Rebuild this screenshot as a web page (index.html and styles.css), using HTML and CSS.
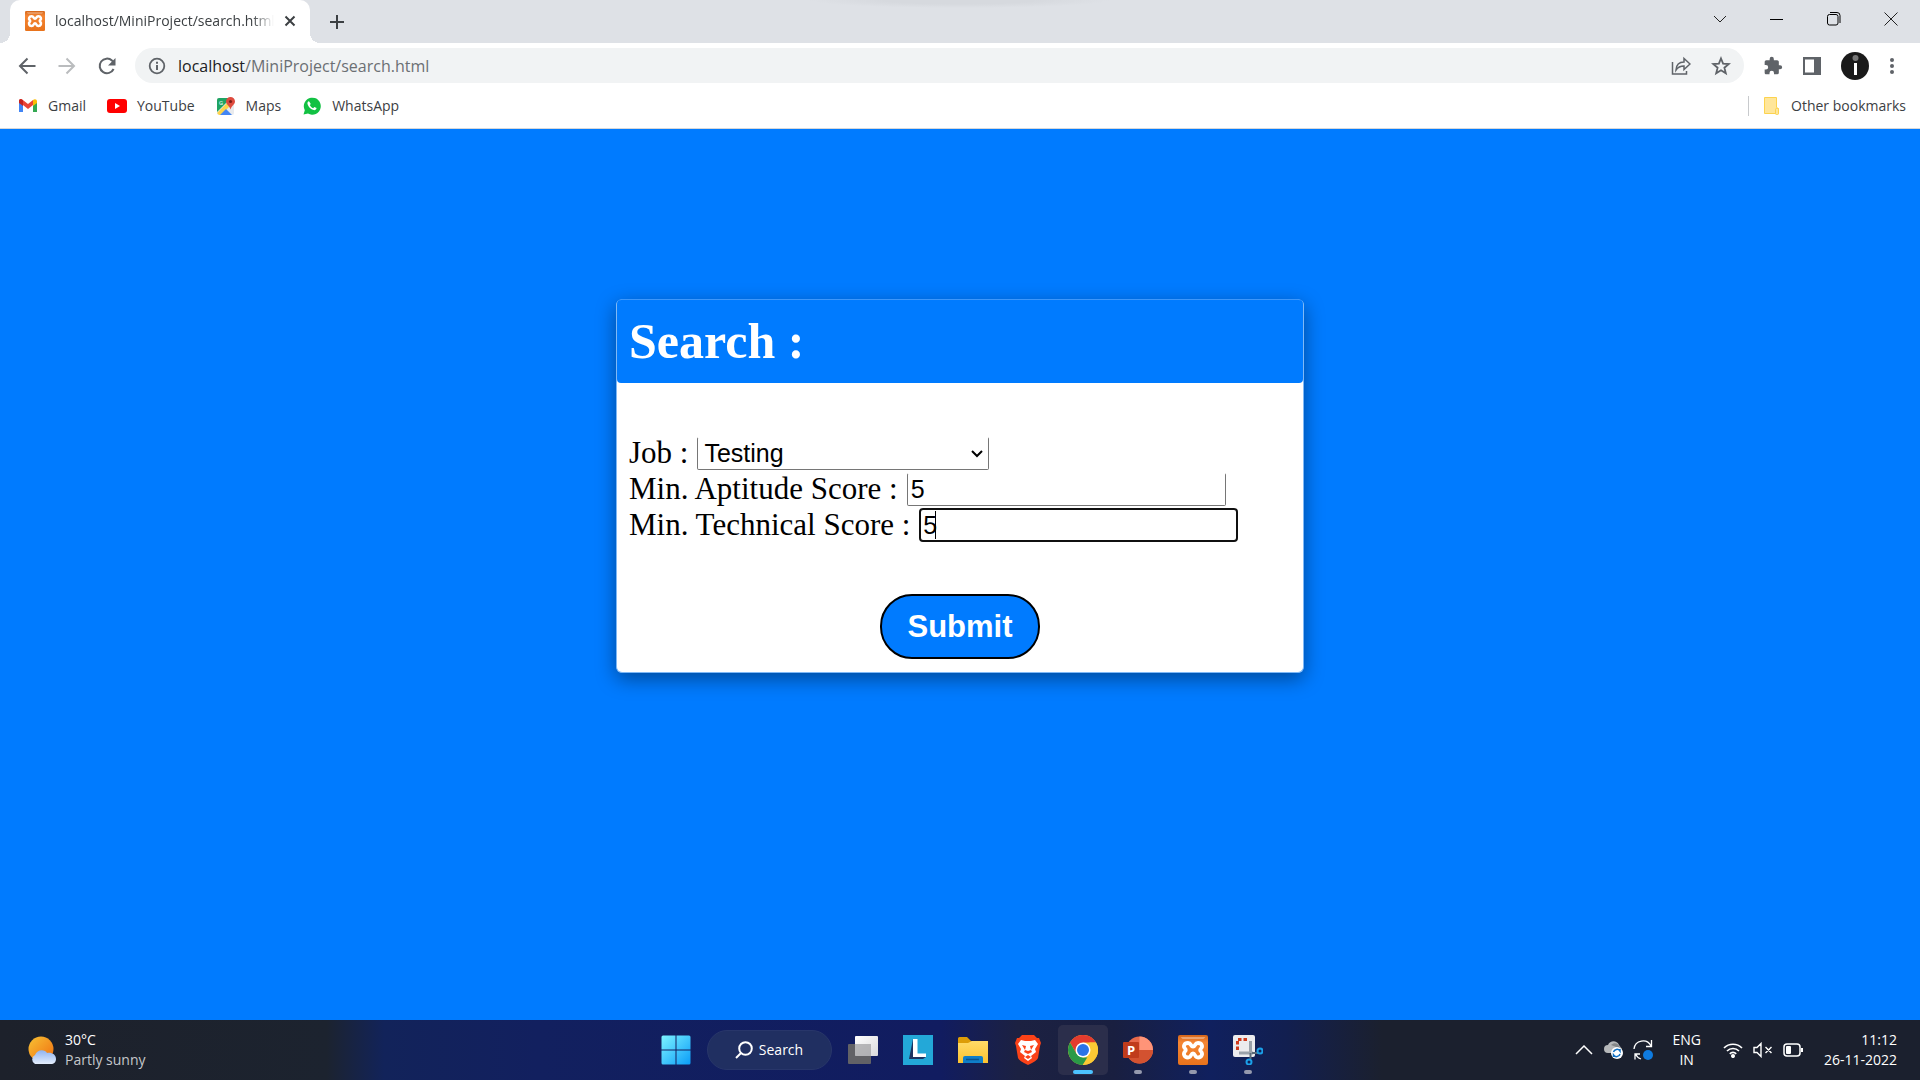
FILE: index.html
```html
<!DOCTYPE html>
<html lang="en">
<head>
<meta charset="utf-8">
<title>localhost/MiniProject/search.html</title>
<link rel="stylesheet" href="styles.css">
</head>
<body>
<svg class="defs" width="0" height="0" aria-hidden="true">
  <defs>
    <linearGradient id="orange" x2="0" y2="1"><stop stop-color="#d5661a"/><stop offset=".25" stop-color="#f58634"/><stop offset="1" stop-color="#e8731c"/></linearGradient>
    <linearGradient id="win" x2="1" y2="1"><stop stop-color="#7df3ff"/><stop offset="1" stop-color="#0a9cf8"/></linearGradient>
    <linearGradient id="sun" x2="1" y2="1"><stop stop-color="#f7c234"/><stop offset="1" stop-color="#f06d10"/></linearGradient>
    <linearGradient id="cloud" x2="0" y2="1"><stop stop-color="#8fb3f0"/><stop offset="1" stop-color="#e4edfc"/></linearGradient>
    <linearGradient id="folder" x2="0" y2="1"><stop stop-color="#ffdb68"/><stop offset="1" stop-color="#fdc22f"/></linearGradient>
    <linearGradient id="pane" x2="1" y2="1"><stop stop-color="#fff"/><stop offset="1" stop-color="#d9d9dc"/></linearGradient>
    <symbol id="xampp" viewBox="0 0 30 30">
      <rect width="30" height="30" rx="2" fill="url(#orange)"/>
      <path d="M2.500 2h25l-2 2h-21z" fill="#fff" opacity=".35"/>
      <path d="M10 8c-4 0-5 3.500-3 5.500q1.500 1.500 0 3c-2 2-1 6 3 6 3.500 0 2.500-4 5-4s1.500 4 5 4c4 0 5-4 3-6q-1.500-1.500 0-3c2-2 1-5.500-3-5.500-3.500 0-2.500 3.500-5 3.500s-1.500-3.500-5-3.500z" fill="none" stroke="#fff" stroke-width="3.800" stroke-linejoin="round"/>
    </symbol>
  </defs>
</svg>
<div class="screen">
  <header class="tabstrip">
    <div class="tab">
      <svg class="i20" viewBox="0 0 30 30"><use href="#xampp"/></svg>
      <span class="tab-title">localhost/MiniProject/search.html</span>
      <button class="icon-btn" aria-label="Close tab"><svg width="12" height="12" viewBox="0 0 12 12"><path d="M1.500 1.500l9 9m0-9l-9 9" stroke="#3c4043" stroke-width="2"/></svg></button>
    </div>
    <button class="icon-btn new-tab" aria-label="New tab"><svg width="16" height="16" viewBox="0 0 16 16"><path d="M8 1v14M1 8h14" stroke="#3c4043" stroke-width="2"/></svg></button>
    <div class="window-buttons">
      <button class="icon-btn" aria-label="Search tabs"><svg width="14" height="14" viewBox="0 0 14 14"><path d="M1 4l6 6 6-6" fill="none" stroke="#222"/></svg></button>
      <button class="icon-btn" aria-label="Minimize"><svg width="14" height="14" viewBox="0 0 14 14"><path d="M0 7.500h13" stroke="#000"/></svg></button>
      <button class="icon-btn" aria-label="Restore"><svg width="14" height="14" viewBox="0 0 14 14" fill="none" stroke="#000"><rect x=".5" y="2.500" width="10.500" height="10.500" rx="2"/><path d="M3 .5h7a3 3 0 0 1 3 3v7.500"/></svg></button>
      <button class="icon-btn" aria-label="Close"><svg width="14" height="14" viewBox="0 0 14 14"><path d="M.5.500l13 13m0-13l-13 13" stroke="#222"/></svg></button>
    </div>
  </header>
  <nav class="toolbar">
    <div class="nav-buttons">
      <button class="icon-btn" aria-label="Back"><svg width="18" height="18" viewBox="0 0 18 18"><path d="M17.500 9H2m7.500-7.500L2 9l7.500 7.500" fill="none" stroke="#5f6368" stroke-width="2"/></svg></button>
      <button class="icon-btn" aria-label="Forward"><svg width="18" height="18" viewBox="0 0 18 18"><path d="M.5 9H16M8.500 1.500L16 9l-7.500 7.500" fill="none" stroke="#babcbe" stroke-width="2"/></svg></button>
      <button class="icon-btn" aria-label="Reload"><svg width="18" height="18" viewBox="0 0 18 18"><path d="M15.600 12A7.300 7.300 0 1 1 14 3.600l2 2" fill="none" stroke="#5f6368" stroke-width="2"/><path d="M17.500 1v7.500H10z" fill="#5f6368"/></svg></button>
    </div>
    <div class="address">
      <svg width="18" height="18" viewBox="0 0 18 18"><circle cx="9" cy="9" r="7.300" fill="none" stroke="#5f6368" stroke-width="1.800"/><path d="M9 8v5M9 4.800v2" stroke="#5f6368" stroke-width="2"/></svg>
      <span class="url"><b>localhost</b>/MiniProject/search.html</span>
      <button class="icon-btn" aria-label="Share"><svg width="20" height="20" viewBox="0 0 20 20" fill="none" stroke="#5f6368" stroke-width="1.500"><path d="M1.500 6v12h14v-3"/><path d="M5 14c.3-5 3-8 8-8V2.500l6 5.500-6 5.500V10c-4 0-6 1-8 4z"/></svg></button>
      <button class="icon-btn" aria-label="Bookmark"><svg width="20" height="20" viewBox="0 0 20 20"><path d="M10 2.500l2.100 5.200 5.600.4-4.300 3.600 1.400 5.500-4.800-3-4.800 3 1.400-5.500-4.300-3.600 5.600-.4z" fill="none" stroke="#5f6368" stroke-width="1.800"/></svg></button>
    </div>
    <div class="actions">
      <button class="icon-btn" aria-label="Extensions"><svg width="20" height="20" viewBox="0 0 24 24" fill="#5f6368"><path d="M20.500 11H19V7c0-1.100-.9-2-2-2h-4V3.500a2.500 2.500 0 0 0-5 0V5H4a2 2 0 0 0-2 2v3.800h1.500a2.700 2.700 0 0 1 0 5.400H2V20c0 1.100.9 2 2 2h3.800v-1.500a2.700 2.700 0 0 1 5.400 0V22H17a2 2 0 0 0 2-2v-4h1.500a2.500 2.500 0 0 0 0-5z"/></svg></button>
      <button class="icon-btn" aria-label="Side panel"><svg width="18" height="18" viewBox="0 0 18 18"><rect width="18" height="18" fill="#5f6368"/><rect x="2" y="2.500" width="9" height="13" fill="#fff"/></svg></button>
      <button class="icon-btn" aria-label="Profile"><svg width="28" height="28" viewBox="0 0 28 28"><circle cx="14" cy="14" r="14" fill="#1a1a1a"/><circle cx="14.500" cy="6" r="3" fill="#777"/><path d="M14.500 11v12" stroke="#fff" stroke-width="3"/></svg></button>
      <button class="icon-btn" aria-label="Menu"><svg width="6" height="18" viewBox="0 0 6 18" fill="#5f6368"><circle cx="3" cy="3" r="2"/><circle cx="3" cy="9" r="2"/><circle cx="3" cy="15" r="2"/></svg></button>
    </div>
  </nav>
  <nav class="bookmarks">
    <a href="#"><svg class="i20" viewBox="0 0 20 20"><path d="M1 6v10h4V9z" fill="#4285f4"/><path d="M19 6v10h-4V9z" fill="#34a853"/><path d="M1 5c0-2 2-2.500 3.200-1.500L10 8l5-4v5l-5 4-5-4-4-3z" fill="#ea4335"/><path d="M15 4c1.500-1.500 4-1 4 1.200V7l-4 3z" fill="#fbbc04"/><path d="M1 5c0-2 2-2.500 4-.8V10L1 7z" fill="#c5221f"/></svg>Gmail</a>
    <a href="#"><svg class="i20" viewBox="0 0 20 20"><rect y="3" width="20" height="14" rx="3" fill="#f00"/><path d="M8 7l5 3-5 3z" fill="#fff"/></svg>YouTube</a>
    <a href="#"><svg class="i20" viewBox="0 0 20 20"><rect x="1" y="2" width="17" height="17" rx="2" fill="#e8eaed"/><path d="M3 2h12L1 16V4q0-2 2-2z" fill="#1fa463"/><path d="M1 17L15 3l3 3L5 19H3z" fill="#fdd44b"/><path d="M4 19l6-6 6 6z" fill="#4285f4"/><text x="3" y="9" font-size="6" font-family="Roboto, sans-serif" fill="#fff">G</text><path d="M10 5.500a4.500 4.500 0 0 1 9 0c0 3-3.500 4-4.500 8-1-4-4.500-5-4.500-8z" fill="#de4b3e"/><circle cx="14.500" cy="5.500" r="1.600" fill="#7b1d16"/></svg>Maps</a>
    <a href="#"><svg class="i20" viewBox="0 0 20 20"><path d="M1.500 18.500l1.300-4.300A8.500 8.500 0 1 1 6 17.500z" fill="#12c143"/><path d="M7 5.300c-1.200.2-1.900 1.600-1.400 3 .9 2.800 3.200 5 6 5.800 1.500.4 2.800-.5 3-2L12.300 11l-1.100 1.300c-1.500-.6-2.700-1.700-3.400-3.200l1-1.200z" fill="#fff"/></svg>WhatsApp</a>
    <a href="#" class="other"><svg class="i20" viewBox="0 0 20 20"><path d="M3.500 1.500h12v10l2 1v5H3.500z" fill="#ffe69a" stroke="#fcd34f"/><rect x="14.500" y="12.500" width="3" height="6" rx="1" fill="#ffe69a" stroke="#fcd34f"/></svg>Other bookmarks</a>
  </nav>

  <main class="page">
    <form class="card">
      <h1>Search :</h1>
      <div class="fields">
        <div class="row"><label for="job">Job :</label>
          <div class="select-wrap"><select id="job" class="field"><option>Testing</option></select><svg width="12" height="8" viewBox="0 0 12 8"><path d="M1 1l5 5 5-5" fill="none" stroke="#000" stroke-width="2"/></svg></div></div>
        <div class="row"><label for="apt">Min. Aptitude Score :</label><input id="apt" class="field" type="text" value="5"></div>
        <div class="row"><label for="tech">Min. Technical Score :</label><div class="focus-wrap"><input id="tech" class="field focused" type="text" value="5"><i class="caret"></i></div></div>
      </div>
      <button type="button" class="submit">Submit</button>
    </form>
  </main>

  <footer class="taskbar">
    <div class="weather">
      <svg width="28" height="28" viewBox="0 0 28 28"><circle cx="13" cy="13" r="12.500" fill="url(#sun)"/><path d="M7 28a5 5 0 0 1 0-9c2-6 10-6 12-2 4-1 9 1 9 6 0 3-2 5-5 5z" fill="url(#cloud)"/></svg>
      <div>30°C<br><span>Partly sunny</span></div>
    </div>
    <div class="apps">
      <button class="app" aria-label="Start"><svg width="30" height="30" viewBox="0 0 30 30"><path d="M2 .5h12.500v14H.5V2Q.5.500 2 .5zM15.500.5H28q1.500 0 1.500 1.500v12.500h-14zM.5 15.500h14v14H2Q.5 29.500.5 28zM15.500 15.500h14V28q0 1.500-1.500 1.500H15.500z" fill="url(#win)"/></svg></button>
      <button class="search"><svg width="18" height="18" viewBox="0 0 18 18" fill="none" stroke="#fff" stroke-width="2"><circle cx="10.500" cy="7.500" r="6.300"/><path d="M6 12l-5 5"/></svg>Search</button>
      <button class="app" aria-label="Task view"><svg width="30" height="30" viewBox="0 0 30 30"><rect y="9" width="23" height="20" rx="1" fill="#626266"/><rect x="7" y="1" width="23" height="20" rx="1" fill="url(#pane)"/><path d="M7 9h16v12H7z" fill="#9d9da0" opacity=".7"/></svg></button>
      <button class="app" aria-label="L"><svg width="30" height="30" viewBox="0 0 30 30"><rect width="30" height="30" fill="#23a8d8"/><path d="M10 4L6 24h14l3-2-9-2z" fill="#1b3360"/><path d="M10 4h4.500v14.500H23V22H10z" fill="#fff"/></svg></button>
      <button class="app" aria-label="File Explorer"><svg width="30" height="30" viewBox="0 0 30 30"><path d="M0 3.500Q0 2 1.500 2H9l4 4h15q2 0 2 2v6H0z" fill="#dd9d08"/><path d="M0 8h10l4-2h16v22H0z" fill="url(#folder)"/><path d="M5 28v-5q0-2 2-2h16q2 0 2 2v5z" fill="#0f7ec9"/><path d="M8 24.500h13" stroke="#09538e" stroke-width="1.500"/></svg></button>
      <button class="app" aria-label="Brave"><svg width="30" height="30" viewBox="0 0 30 30"><path d="M9 0h12l3 3h2l2 5-1 3-2 12q-1 3-10 7-9-4-10-7L3 11 2 8l2-5h2z" fill="#fb4218"/><path d="M8 5l4 1h6l4-1 3 4-3 5 1 3-5 4 1 2-4 3-4-3 1-2-5-4 1-3-3-5z" fill="#fff"/><path d="M9 10l4 1-1 4 3 1 3-1-1-4 4-1-3 5 1 2-4 2-4-2 1-2zM12 22l3-2 3 2-3 2z" fill="#fb4218"/></svg></button>
      <button class="app active" aria-label="Chrome"><svg width="30" height="30" viewBox="0 0 30 30"><circle cx="15" cy="15" r="15" fill="#fcc934"/><path d="M2 7.500A15 15 0 0 1 28 7.500H15L8.500 18.700z" fill="#e33b2e"/><path d="M2 7.500L8.500 18.750 15 22.500h6L14.700 30A15 15 0 0 1 2 7.500z" fill="#2a9a47"/><path d="M28 7.500A15 15 0 0 1 14.700 30l6.800-11.300V7.500z" fill="#fcc934"/><circle cx="15" cy="15" r="7.500" fill="#fff"/><circle cx="15" cy="15" r="6" fill="#2a74e8"/></svg></button>
      <button class="app open" aria-label="PowerPoint"><svg width="30" height="30" viewBox="0 0 30 30"><circle cx="16.500" cy="15" r="13.500" fill="#e8694a"/><path d="M16.500 1.500A13.500 13.500 0 0 1 30 15H16.500z" fill="#ff9478"/><path d="M3 15h27a13.500 13.500 0 0 1-27 0z" fill="#d35230"/><rect y="7" width="16" height="16" rx="1" fill="#c03c1c"/><text x="4" y="20" font-size="13" font-weight="700" font-family="Open Sans, sans-serif" fill="#fff">P</text></svg></button>
      <button class="app open" aria-label="XAMPP"><svg width="30" height="30" viewBox="0 0 30 30"><use href="#xampp"/></svg></button>
      <button class="app open" aria-label="Snipping Tool"><svg width="30" height="30" viewBox="0 0 30 30"><rect width="22" height="22" rx="2" fill="#ececee"/><path d="M4.500 15V4.500H16" fill="none" stroke="#d03a1c" stroke-width="3" stroke-dasharray="3.500 2"/><path d="M17.500 6v13M6 18h14" stroke="#9aa2aa" stroke-width="3"/><path d="M17.500 18v6M19 18h6" stroke="#5a6a78" stroke-width="2"/><circle cx="16" cy="27" r="2.500" fill="none" stroke="#1ba0e8" stroke-width="2"/><circle cx="27" cy="16" r="2.500" fill="none" stroke="#1ba0e8" stroke-width="2"/></svg></button>
    </div>
    <div class="tray">
      <svg width="18" height="10" viewBox="0 0 18 10"><path d="M1 9l8-8 8 8" fill="none" stroke="#fff" stroke-width="1.500"/></svg>
      <svg width="20" height="18" viewBox="0 0 20 18"><path d="M5 12a4 4 0 0 1 0-8c2-5 9-5 11 0l3 4-4 4z" fill="#b6b8ba"/><path d="M8 4c3-3 7-2 8 1l3 3-6-2z" fill="#858789"/><circle cx="14" cy="12" r="6" fill="#fff"/><path d="M10.500 11a3.600 3.600 0 0 1 6.500-1v-2m0 5a3.600 3.600 0 0 1-6.500 1v2" fill="none" stroke="#0d6fc4" stroke-width="1.500"/></svg>
      <svg width="20" height="22" viewBox="0 0 20 22" fill="none" stroke="#fff" stroke-width="1.300"><path d="M1 10a9 9 0 0 1 17-3M18.500 1v6.500H13M8 20a9 9 0 0 1-5.500-5M2 20.500V15h5"/><circle cx="15" cy="16" r="5" fill="#0f7be0" stroke="none"/></svg>
      <div class="lang">ENG<br>IN</div>
      <svg width="20" height="16" viewBox="0 0 20 16" fill="none" stroke="#fff" stroke-width="1.700"><path d="M1 6a12.700 12.700 0 0 1 18 0M4 9a8.500 8.500 0 0 1 12 0M6.800 11.800a4.500 4.500 0 0 1 6.400 0"/><circle cx="10" cy="14" r="1.200" fill="#fff"/></svg>
      <svg width="20" height="16" viewBox="0 0 20 16" fill="none" stroke="#fff" stroke-width="1.400"><path d="M1 5.500h3L8 1.500v13l-4-4H1zM12.500 5l6 6m0-6l-6 6"/></svg>
      <svg width="20" height="14" viewBox="0 0 20 14"><rect x="1" y="1" width="16" height="12" rx="3" fill="none" stroke="#fff" stroke-width="1.500"/><rect x="3" y="3" width="5" height="8" rx="1" fill="#fff"/><path d="M19 5v4" stroke="#fff" stroke-width="2"/></svg>
      <div class="clock">11:12<br>26-11-2022</div>
    </div>
  </footer>
</div>
</body>
</html>
```
FILE: styles.css
```css
* { box-sizing: border-box; }
body { margin: 0; font-family: "Open Sans", "Noto Sans", sans-serif; font-size: 14px; color: #3c4043; }
button { font: inherit; color: inherit; border: 0; padding: 0; background: none; }
svg { display: block; flex: none; }
.defs { position: absolute; }
.i20 { width: 20px; height: 20px; }
.screen { display: flex; flex-direction: column; min-height: 100vh; background: #fff; }
.icon-btn { display: flex; align-items: center; justify-content: center; }

.tabstrip { display: flex; align-items: flex-start; height: 43px; padding: 0 1px 0 10px; background: radial-gradient(ellipse 150px 8px at 50% 0, #d6d9de 50%, transparent) #dee1e6; }
.tab { position: relative; display: flex; align-items: center; gap: 10px; width: 300px; height: 43px; padding: 0 14px 2px 15px; background: #fff; border-radius: 10px 10px 0 0; }
.tab::before, .tab::after { content: ""; position: absolute; bottom: 0; width: 10px; height: 10px; }
.tab::before { left: -10px; background: radial-gradient(circle at 0 0, #dee1e6 10px, #fff 10px); }
.tab::after { right: -10px; background: radial-gradient(circle at 100% 0, #dee1e6 10px, #fff 10px); }
.tab-title { flex: 1; overflow: hidden; white-space: nowrap; -webkit-mask-image: linear-gradient(90deg, #000 90%, transparent); mask-image: linear-gradient(90deg, #000 90%, transparent); }
.new-tab { width: 54px; height: 43px; }
.window-buttons { display: flex; margin-left: auto; }
.window-buttons .icon-btn { width: 57px; height: 37px; }

.toolbar { display: flex; align-items: center; height: 45px; gap: 19px; padding: 0 25px 0 18px; }
.nav-buttons { display: flex; gap: 22px; }
.address { flex: 1; display: flex; align-items: center; height: 35px; gap: 20px; padding: 0 13px; border-radius: 18px; background: #f1f3f4; }
.url { flex: 1; margin-left: -8px; font-size: 16px; color: #6b6f73; }
.url b { font-weight: 400; color: #202124; }
.actions { display: flex; align-items: center; gap: 20px; }

.bookmarks { display: flex; align-items: center; gap: 21px; height: 41px; padding: 0 14px 5px 18px; border-bottom: 1px solid #d5d7da; }
.bookmarks a { display: flex; align-items: center; gap: 10px; color: #3c4043; text-decoration: none; }
.bookmarks .other { margin-left: auto; padding-left: 12px; border-left: 1px solid #c8cacd; }

.page { flex: 1; display: flex; flex-direction: column; align-items: center; padding: 170px 20px; background: #007bff; font-family: "Liberation Serif", serif; }
.card { width: 100%; max-width: 688px; padding-bottom: 13px; border: 1px solid #7fb9f7; border-top-color: #3d97fb; border-radius: 6px; background: #fff; box-shadow: 0 6px 20px rgba(0, 0, 0, .4); }
.card h1 { margin: 0; padding: 12px; border-radius: 4px; background: #007bff; color: #fff; font-size: 50px; line-height: 59px; }
.fields { padding: 52px 12px 51px; font-size: 31px; line-height: 36px; color: #000; }
.row { display: flex; align-items: center; gap: 9px; height: 36px; white-space: nowrap; }
.field { display: block; width: 319px; height: 33px; padding: 0 3px; border: 1px solid #767676; border-top-color: transparent; border-radius: 2px; outline: 0; background: #fff; color: #000; font: 25px "Liberation Sans", sans-serif; }
.select-wrap, .focus-wrap { position: relative; }
.select-wrap .field { width: 292px; appearance: none; padding: 0 6px; }
.select-wrap svg { position: absolute; right: 6px; top: 13px; }
.field.focused { height: 34px; padding: 0 2px; border: 2px solid #101010; border-radius: 4px; }
.caret { position: absolute; left: 16px; top: 3px; width: 1px; height: 28px; background: #000; }
.submit { display: block; width: 160px; height: 65px; margin: 0 auto; border: 2px solid #000; border-radius: 32px; background: #007bff; color: #fff; font: bold 31px "Liberation Sans", sans-serif; }

.taskbar { display: grid; grid-template-columns: 1fr auto 1fr; align-items: center; height: 60px; color: #fff; background: linear-gradient(90deg, #1d212b 0, #1c232f 17%, #12235a 20%, #12205f 28%, #111c60 49%, #1c2142 53%, #191f40 58%, #10205e 63%, #121f50 67%, #1b202e 72%); line-height: 20px; }
.weather { display: flex; align-items: center; gap: 9px; padding-left: 28px; }
.weather span { color: #c5c7cb; }
.apps { display: flex; align-items: center; gap: 5px; padding-left: 3px; }
.app { position: relative; display: grid; place-items: center; width: 50px; height: 50px; border-radius: 5px; }
.search { display: flex; align-items: center; justify-content: center; gap: 6px; width: 125px; height: 40px; margin: 0 1px; border-radius: 20px; background: #202f61; border: 1px solid #28366a; }
.active { background: #2b2e4b; }
.app.active::after, .app.open::after { content: ""; position: absolute; bottom: 1px; left: 50%; margin-left: -4px; width: 8px; height: 4px; border-radius: 2px; background: #9499ad; }
.app.active::after { margin-left: -10px; width: 20px; background: #4cc2ff; }
.tray { display: flex; align-items: center; justify-content: flex-end; gap: 10px; padding-right: 23px; }
.lang { margin: 0 12px 0 9px; text-align: center; }
.clock { margin-left: 11px; text-align: right; }
```
